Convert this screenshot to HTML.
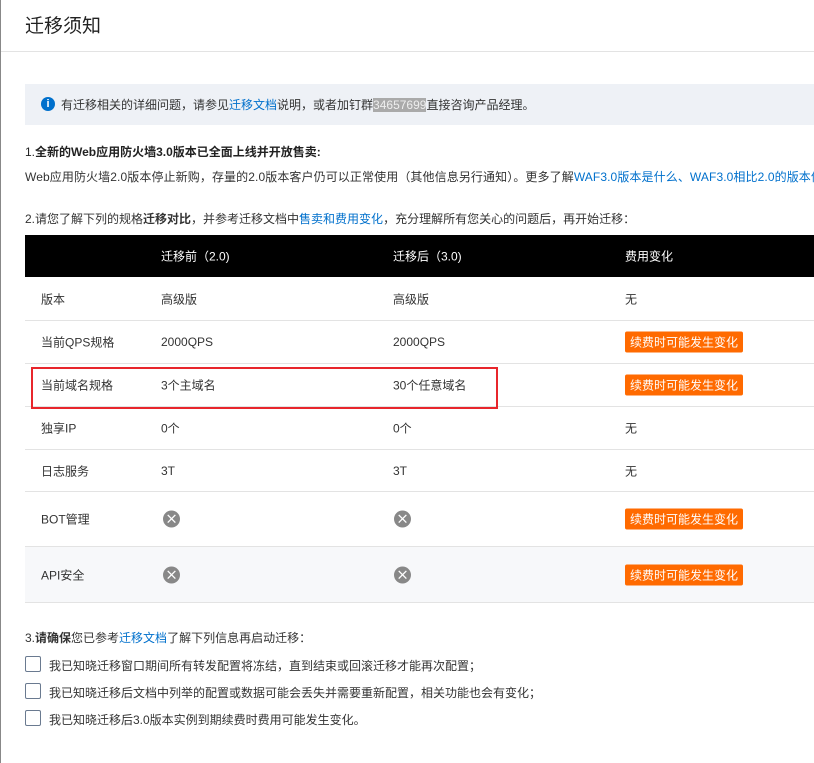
<!DOCTYPE html>
<html><head><meta charset="utf-8"><style>
*{margin:0;padding:0;box-sizing:border-box}
body{width:814px;height:763px;background:#fff;font-family:"Liberation Sans","Noto Sans CJK SC",sans-serif;font-size:12px;color:#333;position:relative;overflow:hidden}
.lb{position:absolute;left:0;top:0;width:1px;height:763px;background:#888}
.abs{position:absolute;white-space:nowrap}
a{color:#0070cc;text-decoration:none}
.title{left:25px;top:11px;font-size:19px;color:#222}
.hr{position:absolute;left:1px;top:51px;width:813px;height:1px;background:#e3e3e3}
.info{position:absolute;left:25px;top:84px;width:789px;height:41px;background:#eef1f6}
.row{position:absolute;left:25px;width:789px;border-bottom:1px solid #e3e3e3}
.row span{position:absolute;top:50%;transform:translateY(-50%);white-space:nowrap}
.badge{background:#ff6a00;color:#fff;padding:2px 5px;font-size:12px;border-radius:2px}
.x{width:17px;height:17px;border-radius:50%;background:#888;color:#fff;font-size:15px;text-align:center;line-height:16px;font-family:"DejaVu Sans",sans-serif}
.cb{position:absolute;left:25px;width:16px;height:16px;border:1px solid #6a7a90;border-radius:2px}
</style></head><body>
<div class="lb"></div>
<div class="abs title">迁移须知</div>
<div class="hr"></div>
<div class="info"></div>
<div class="abs" style="left:41px;top:97px;width:14px;height:14px;border-radius:50%;background:#0070cc;color:#fff;font-size:11px;font-weight:bold;text-align:center;line-height:14px">i</div>
<div class="abs" style="left:61px;top:96px">有迁移相关的详细问题，请参见<a>迁移文档</a>说明，或者加钉群<span style="background:#aaa;color:#eee">34657699</span>直接咨询产品经理。</div>
<div class="abs" style="left:25px;top:143px;color:#222">1.<b>全新的Web应用防火墙3.0版本已全面上线并开放售卖:</b></div>
<div class="abs" style="left:25px;top:168px;letter-spacing:0.1px">Web应用防火墙2.0版本停止新购，存量的2.0版本客户仍可以正常使用（其他信息另行通知）。更多了解<a>WAF3.0版本是什么、WAF3.0相比2.0的版本优势</a></div>
<div class="abs" style="left:25px;top:210px">2.请您了解下列的规格<b>迁移对比</b>，并参考迁移文档中<a>售卖和费用变化</a>，充分理解所有您关心的问题后，再开始迁移：</div>
<div class="row" style="top:235px;height:42px;background:#000;color:#fff;border:none"><span style="left:136px">迁移前（2.0)</span><span style="left:368px">迁移后（3.0)</span><span style="left:600px">费用变化</span></div>
<div class="row" style="top:277px;height:44px"><span style="left:16px">版本</span><span style="left:136px">高级版</span><span style="left:368px">高级版</span><span style="left:600px">无</span></div>
<div class="row" style="top:321px;height:43px"><span style="left:16px">当前QPS规格</span><span style="left:136px">2000QPS</span><span style="left:368px">2000QPS</span><span style="left:600px" class="badge">续费时可能发生变化</span></div>
<div class="row" style="top:364px;height:43px"><span style="left:16px">当前域名规格</span><span style="left:136px">3个主域名</span><span style="left:368px">30个任意域名</span><span style="left:600px" class="badge">续费时可能发生变化</span></div>
<div class="row" style="top:407px;height:43px"><span style="left:16px">独享IP</span><span style="left:136px">0个</span><span style="left:368px">0个</span><span style="left:600px">无</span></div>
<div class="row" style="top:450px;height:42px"><span style="left:16px">日志服务</span><span style="left:136px">3T</span><span style="left:368px">3T</span><span style="left:600px">无</span></div>
<div class="row" style="top:492px;height:55px"><span style="left:138px" class="x">×</span><span style="left:369px" class="x">×</span><span style="left:16px">BOT管理</span><span style="left:600px" class="badge">续费时可能发生变化</span></div>
<div class="row" style="top:547px;height:56px;background:#f7f8fa"><span style="left:16px">API安全</span><span style="left:138px" class="x">×</span><span style="left:369px" class="x">×</span><span style="left:600px" class="badge">续费时可能发生变化</span></div>
<div class="abs" style="left:31px;top:367px;width:467px;height:42px;border:2px solid #e8262c"></div>
<div class="abs" style="left:25px;top:629px">3.<b>请确保</b>您已参考<a>迁移文档</a>了解下列信息再启动迁移：</div>
<div class="cb" style="top:656px"></div><div class="abs" style="left:49px;top:657px">我已知晓迁移窗口期间所有转发配置将冻结，直到结束或回滚迁移才能再次配置；</div>
<div class="cb" style="top:683px"></div><div class="abs" style="left:49px;top:684px">我已知晓迁移后文档中列举的配置或数据可能会丢失并需要重新配置，相关功能也会有变化；</div>
<div class="cb" style="top:710px"></div><div class="abs" style="left:49px;top:711px">我已知晓迁移后3.0版本实例到期续费时费用可能发生变化。</div>
</body></html>
